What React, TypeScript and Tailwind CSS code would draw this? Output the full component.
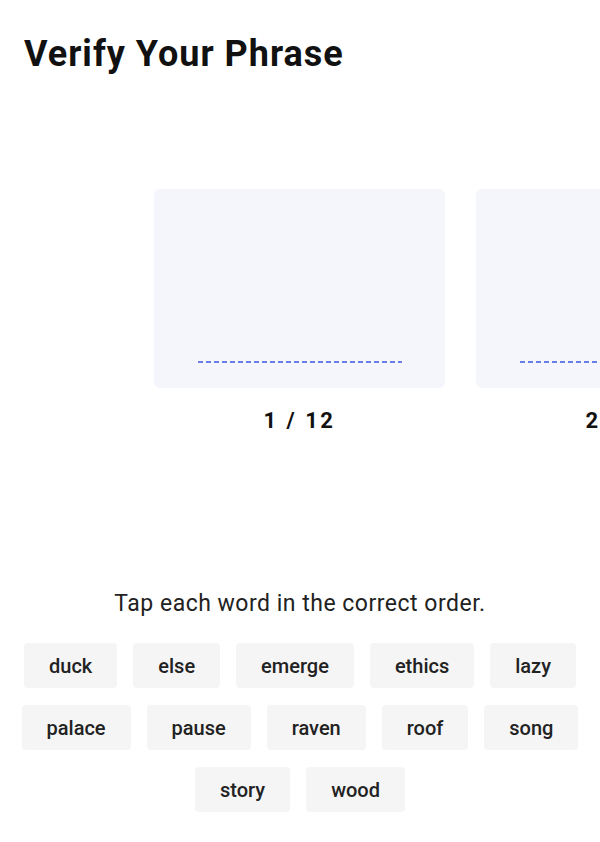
const WORDS = ['duck', 'else', 'emerge', 'ethics', 'lazy', 'palace', 'pause', 'raven', 'roof', 'song', 'story', 'wood'];

function Slot({ n }: { n: number }) {
  return (
    <div className="flex w-[291px] flex-shrink-0 flex-col items-center">
      <div className="flex h-[199px] w-full items-end justify-center rounded-md bg-[#f5f6fc] pb-[25px]">
        {/* dashed underline where the chosen word lands */}
        <svg width="204" height="2" className="block">
          <line x1="0" y1="1" x2="204" y2="1" stroke="#6b7fe6" strokeWidth="1.8" strokeDasharray="5 3" />
        </svg>
      </div>
      <p className="mt-[19px] text-[22px] font-bold leading-[28px] tracking-[2.5px] text-[#111]">
        {n} / 12
      </p>
    </div>
  );
}

export default function App() {
  return (
    <div className="relative h-[842px] w-[600px] overflow-hidden bg-white font-['Roboto',sans-serif]">
      <h1 className="pl-6 pt-[32px] text-[36px] font-bold leading-[44px] tracking-[1px] text-[#111]">
        Verify Your Phrase
      </h1>

      <div className="mt-[113px] flex gap-[31px] pl-[154px]">
        <Slot n={1} />
        <Slot n={2} />
      </div>

      <p className="mt-[155px] text-center text-[23px] leading-[28px] tracking-[0.5px] text-[#222]">
        Tap each word in the correct order.
      </p>

      <div className="mt-[25px] flex flex-wrap justify-center gap-x-4 gap-y-[17px] px-3">
        {WORDS.map((w) => (
          <button
            key={w}
            className="h-[45px] rounded-sm bg-[#f5f5f5] px-[25px] text-[20px] font-medium leading-none text-[#222]"
          >
            {w}
          </button>
        ))}
      </div>
    </div>
  );
}
